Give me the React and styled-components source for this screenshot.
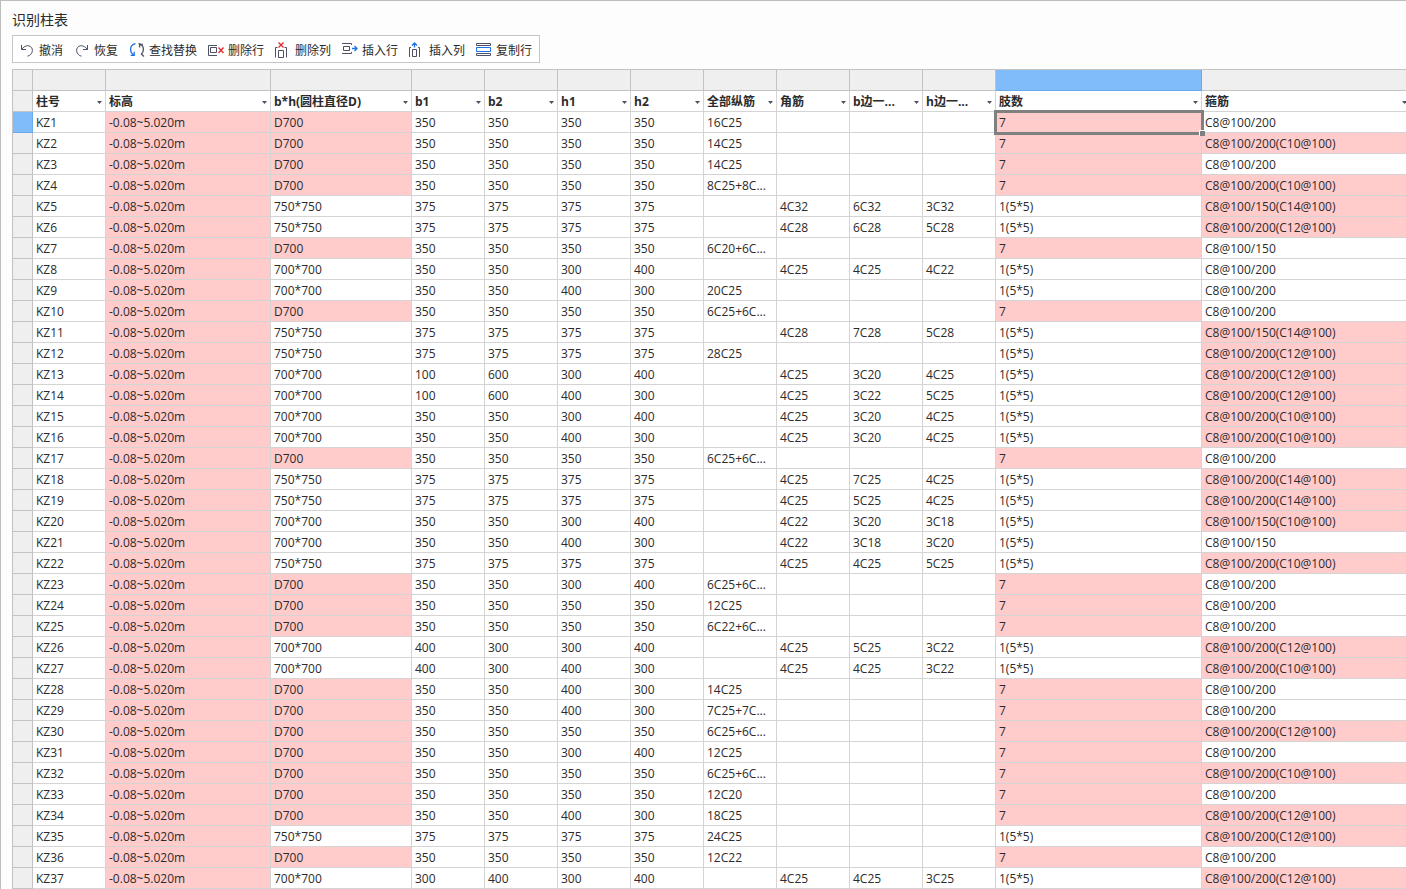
import React from "react";
import styled, { createGlobalStyle } from "styled-components";

const GlobalStyle = createGlobalStyle`
  * {
    box-sizing: border-box;
  }

  body {
    margin: 0;

    font-family: "Open Sans", "Noto Sans CJK SC", sans-serif;
    font-size: 12px;
    color: #2b2b2b;

    background-color: #fdfdfd;
  }

  button {
    padding: 0;
    border: 0;

    font: inherit;
    color: inherit;

    background: none;
  }
`;

const Window = styled.main`
  min-height: 100vh;

  padding-left: 11px;
  border-top: 1px solid #bdbdbd;
  border-left: 1px solid #bdbdbd;

  overflow: hidden;
`;

const Title = styled.h1`
  height: 34px;
  margin: 0;
  padding-top: 4px;

  font-size: 14px;
  font-weight: 400;
  line-height: 30px;
`;

const Toolbar = styled.div`
  width: max-content;
  height: 28px;

  display: flex;
  gap: 11px;

  padding: 2px 7px 0 6px;
  margin-bottom: 6px;
  border: 1px solid #c6c6ca;

  background-color: #fff;
`;

const ToolButton = styled.button`
  display: flex;
  align-items: center;
  gap: 4px;

  white-space: nowrap;
`;

const ToolLabel = styled.span`
  padding-top: 2px;

  line-height: 22px;
`;

const Icon = styled.svg`
  width: 16px;
  height: 16px;
  flex-shrink: 0;

  fill: none;
  stroke: #4d5163;
`;

const Grid = styled.div`
  border-top: 1px solid #c3c3c3;
  border-left: 1px solid #c3c3c3;

  overflow: hidden;
`;

const Table = styled.table`
  width: 100%;
  min-width: 1398px;

  table-layout: fixed;
  border-collapse: separate;
  border-spacing: 0;

  background-color: #fff;
`;

const Col = styled.col`
  width: ${props => (props.$width ? `${props.$width}px` : "auto")};
`;

const Strip = styled.td`
  height: 21px;
  padding: 0;
  border-right: 1px solid ${props => (props.$active ? "#6aa9ea" : "#c3c3c3")};
  border-bottom: 1px solid ${props => (props.$active ? "#6aa9ea" : "#c3c3c3")};

  background-color: ${props => (props.$active ? "#80bbfa" : "#efefef")};
`;

const Header = styled.th`
  height: 21px;
  padding: 2px 3px 0;
  border-right: 1px solid #d4d4d4;
  border-bottom: 1px solid #d4d4d4;

  font-weight: 700;
  line-height: 18px;
  text-align: left;
`;

const HeaderContent = styled.div`
  display: flex;
  justify-content: space-between;

  white-space: nowrap;
`;

const FilterButton = styled.button`
  width: 6px;

  display: flex;
  align-items: center;
  justify-content: center;
`;

const Arrow = styled.svg`
  width: 5px;
  height: 3px;
  flex-shrink: 0;

  fill: #4d5163;
`;

const Cell = styled.td`
  position: ${props => (props.$selected ? "relative" : "static")};

  height: 21px;
  padding: 2px 3px 0;
  border-right: 1px solid #d4d4d4;
  border-bottom: 1px solid #d4d4d4;

  line-height: 18px;
  white-space: nowrap;

  background-color: ${props => (props.$marked ? "#ffcbcb" : "#fff")};
`;

const Selection = styled.div`
  position: absolute;
  inset: -2px -3px -3px -2px;

  border: 3px solid #808080;

  &::after {
    content: "";

    position: absolute;
    right: -4px;
    bottom: -4px;

    width: 5px;
    height: 5px;
    border-top: 1px solid #fff;
    border-left: 1px solid #fff;

    background-color: #808080;
  }
`;

const BLUE = "#1a73e8";
const RED = "#e5252a";

const tools = [
  {
    label: "撤消",
    icon: (
      <>
        <path d="M2.5 3V7.5H7" />
        <path d="M2.5 7.5C4.5 4.8 7 3.5 9.3 3.7C12 4 13.5 6.3 13.4 8.6C13.2 11.6 11 13.7 8.5 14.2" />
      </>
    )
  },
  {
    label: "恢复",
    icon: (
      <>
        <path d="M13.5 3V7.5H9" />
        <path d="M13.5 7.5C11.5 4.8 9 3.5 6.7 3.7C4 4 2.5 6.3 2.6 8.6C2.8 11.6 5 13.7 7.5 14.2" />
      </>
    )
  },
  {
    label: "查找替换",
    icon: (
      <>
        <g stroke={BLUE} strokeWidth="1.3">
          <path d="M6.5 1.6C3.5 2.2 1.6 4.6 1.6 7.4C1.6 9.8 2.8 11.8 4.8 12.9" />
          <path d="M1.7 13.3H5.2V9.8" />
        </g>
        <g strokeWidth="1.3">
          <path d="M9.5 1.7C12.6 2.4 14.4 4.8 14.4 7.5C14.4 9.4 13.7 10.9 12.4 12.2" />
          <path d="M13.8 2.5H10.6V5.4M12 11.7L15 14.4" />
        </g>
      </>
    )
  },
  {
    label: "删除行",
    icon: (
      <>
        <path d="M9 3.5H0.5V13.5H9" />
        <path d="M2.5 5.5H8.5V10.5H2.5Z" />
        <path d="M10.5 5.5L15.5 11M15.5 5.5L10.5 11" stroke={RED} strokeWidth="1.3" />
      </>
    )
  },
  {
    label: "删除列",
    icon: (
      <>
        <path d="M2.5 5.5H0.5V15.5M9.5 5.5H11.5V15.5" />
        <path d="M3.5 8.5H8.5V15.5H3.5Z" />
        <path d="M3.5 0.5L8.5 5.5M8.5 0.5L3.5 5.5" stroke={RED} strokeWidth="1.3" />
      </>
    )
  },
  {
    label: "插入行",
    icon: (
      <>
        <path d="M9.5 3V1.5H0M0 11.5H9.5V10" />
        <path d="M1.5 4.5H7.5V8.5H1.5Z" />
        <path d="M10 6.5H15M12.5 4L15 6.5L12.5 9" stroke={BLUE} strokeWidth="1.3" />
      </>
    )
  },
  {
    label: "插入列",
    icon: (
      <>
        <path d="M2 5.5H0.5V15M9 5.5H10.5V15" />
        <path d="M3.5 7.5H7.5V14.5H3.5Z" />
        <path d="M5.5 5.5V1M3 3.5L5.5 1L8 3.5" stroke={BLUE} strokeWidth="1.3" />
      </>
    )
  },
  {
    label: "复制行",
    icon: (
      <>
        <path d="M0.5 1.5H14.5V3.5H0.5ZM0.5 11.5H14.5V13.5H0.5Z" />
        <path d="M0.5 5.5H14.5V9.5H0.5Z" stroke={BLUE} />
      </>
    )
  }
];

const columns = [
  { label: "柱号", width: 73 },
  { label: "标高", width: 165 },
  { label: "b*h(圆柱直径D)", width: 141 },
  { label: "b1", width: 73 },
  { label: "b2", width: 73 },
  { label: "h1", width: 73 },
  { label: "h2", width: 73 },
  { label: "全部纵筋", width: 73 },
  { label: "角筋", width: 73 },
  { label: "b边一...", width: 73 },
  { label: "h边一...", width: 73 },
  { label: "肢数", width: 206 },
  { label: "箍筋" }
];

const SELECTED_COLUMN = 11;

// size, b1, b2, h1, h2, all bars, corner bars, b side, h side, stirrup
const rows = [
  ["D700", 350, 350, 350, 350, "16C25", "", "", "", "C8@100/200"],
  ["D700", 350, 350, 350, 350, "14C25", "", "", "", "C8@100/200(C10@100)"],
  ["D700", 350, 350, 350, 350, "14C25", "", "", "", "C8@100/200"],
  ["D700", 350, 350, 350, 350, "8C25+8C...", "", "", "", "C8@100/200(C10@100)"],
  ["750*750", 375, 375, 375, 375, "", "4C32", "6C32", "3C32", "C8@100/150(C14@100)"],
  ["750*750", 375, 375, 375, 375, "", "4C28", "6C28", "5C28", "C8@100/200(C12@100)"],
  ["D700", 350, 350, 350, 350, "6C20+6C...", "", "", "", "C8@100/150"],
  ["700*700", 350, 350, 300, 400, "", "4C25", "4C25", "4C22", "C8@100/200"],
  ["700*700", 350, 350, 400, 300, "20C25", "", "", "", "C8@100/200"],
  ["D700", 350, 350, 350, 350, "6C25+6C...", "", "", "", "C8@100/200"],
  ["750*750", 375, 375, 375, 375, "", "4C28", "7C28", "5C28", "C8@100/150(C14@100)"],
  ["750*750", 375, 375, 375, 375, "28C25", "", "", "", "C8@100/200(C12@100)"],
  ["700*700", 100, 600, 300, 400, "", "4C25", "3C20", "4C25", "C8@100/200(C12@100)"],
  ["700*700", 100, 600, 400, 300, "", "4C25", "3C22", "5C25", "C8@100/200(C12@100)"],
  ["700*700", 350, 350, 300, 400, "", "4C25", "3C20", "4C25", "C8@100/200(C10@100)"],
  ["700*700", 350, 350, 400, 300, "", "4C25", "3C20", "4C25", "C8@100/200(C10@100)"],
  ["D700", 350, 350, 350, 350, "6C25+6C...", "", "", "", "C8@100/200"],
  ["750*750", 375, 375, 375, 375, "", "4C25", "7C25", "4C25", "C8@100/200(C14@100)"],
  ["750*750", 375, 375, 375, 375, "", "4C25", "5C25", "4C25", "C8@100/200(C14@100)"],
  ["700*700", 350, 350, 300, 400, "", "4C22", "3C20", "3C18", "C8@100/150(C10@100)"],
  ["700*700", 350, 350, 400, 300, "", "4C22", "3C18", "3C20", "C8@100/150"],
  ["750*750", 375, 375, 375, 375, "", "4C25", "4C25", "5C25", "C8@100/200(C10@100)"],
  ["D700", 350, 350, 300, 400, "6C25+6C...", "", "", "", "C8@100/200"],
  ["D700", 350, 350, 350, 350, "12C25", "", "", "", "C8@100/200"],
  ["D700", 350, 350, 350, 350, "6C22+6C...", "", "", "", "C8@100/200"],
  ["700*700", 400, 300, 300, 400, "", "4C25", "5C25", "3C22", "C8@100/200(C12@100)"],
  ["700*700", 400, 300, 400, 300, "", "4C25", "4C25", "3C22", "C8@100/200(C10@100)"],
  ["D700", 350, 350, 400, 300, "14C25", "", "", "", "C8@100/200"],
  ["D700", 350, 350, 400, 300, "7C25+7C...", "", "", "", "C8@100/200"],
  ["D700", 350, 350, 350, 350, "6C25+6C...", "", "", "", "C8@100/200(C12@100)"],
  ["D700", 350, 350, 300, 400, "12C25", "", "", "", "C8@100/200"],
  ["D700", 350, 350, 350, 350, "6C25+6C...", "", "", "", "C8@100/200(C10@100)"],
  ["D700", 350, 350, 350, 350, "12C20", "", "", "", "C8@100/200"],
  ["D700", 350, 350, 400, 300, "18C25", "", "", "", "C8@100/200(C12@100)"],
  ["750*750", 375, 375, 375, 375, "24C25", "", "", "", "C8@100/200(C12@100)"],
  ["D700", 350, 350, 350, 350, "12C22", "", "", "", "C8@100/200"],
  ["700*700", 300, 400, 300, 400, "", "4C25", "4C25", "3C25", "C8@100/200(C12@100)"]
];

const Row = ({ index, row }) => {
  const size = row[0];
  const stirrup = row[row.length - 1];
  const isRound = size.startsWith("D");
  const isSelected = index === 0;

  return (
    <tr>
      <Strip $active={isSelected} />
      <Cell>{`KZ${index + 1}`}</Cell>
      <Cell $marked>{"-0.08~5.020m"}</Cell>
      <Cell $marked={isRound}>{size}</Cell>
      {row.slice(1, -1).map((value, i) => (
        <Cell key={i}>{value}</Cell>
      ))}
      <Cell $marked={isRound} $selected={isSelected}>
        {isRound ? "7" : "1(5*5)"}
        {isSelected && <Selection />}
      </Cell>
      <Cell $marked={stirrup.includes("(")}>{stirrup}</Cell>
    </tr>
  );
};

const App = () => (
  <Window>
    <GlobalStyle />
    <Title>{"识别柱表"}</Title>
    <Toolbar>
      {tools.map(({ label, icon }) => (
        <ToolButton key={label} type="button">
          <Icon viewBox="0 0 16 16">{icon}</Icon>
          <ToolLabel>{label}</ToolLabel>
        </ToolButton>
      ))}
    </Toolbar>
    <Grid>
      <Table>
        <colgroup>
          <Col $width={20} />
          {columns.map(({ label, width }) => (
            <Col key={label} $width={width} />
          ))}
        </colgroup>
        <thead>
          <tr>
            <Strip />
            {columns.map(({ label }, i) => (
              <Strip key={label} $active={i === SELECTED_COLUMN} />
            ))}
          </tr>
          <tr>
            <Strip />
            {columns.map(({ label }) => (
              <Header key={label} scope="col">
                <HeaderContent>
                  <span>{label}</span>
                  <FilterButton type="button" aria-label={`筛选${label}`}>
                    <Arrow viewBox="0 0 5 3">
                      <path d="M0 0H5L2.5 3Z" />
                    </Arrow>
                  </FilterButton>
                </HeaderContent>
              </Header>
            ))}
          </tr>
        </thead>
        <tbody>
          {rows.map((row, i) => (
            <Row key={i} index={i} row={row} />
          ))}
        </tbody>
      </Table>
    </Grid>
  </Window>
);

export default App;
